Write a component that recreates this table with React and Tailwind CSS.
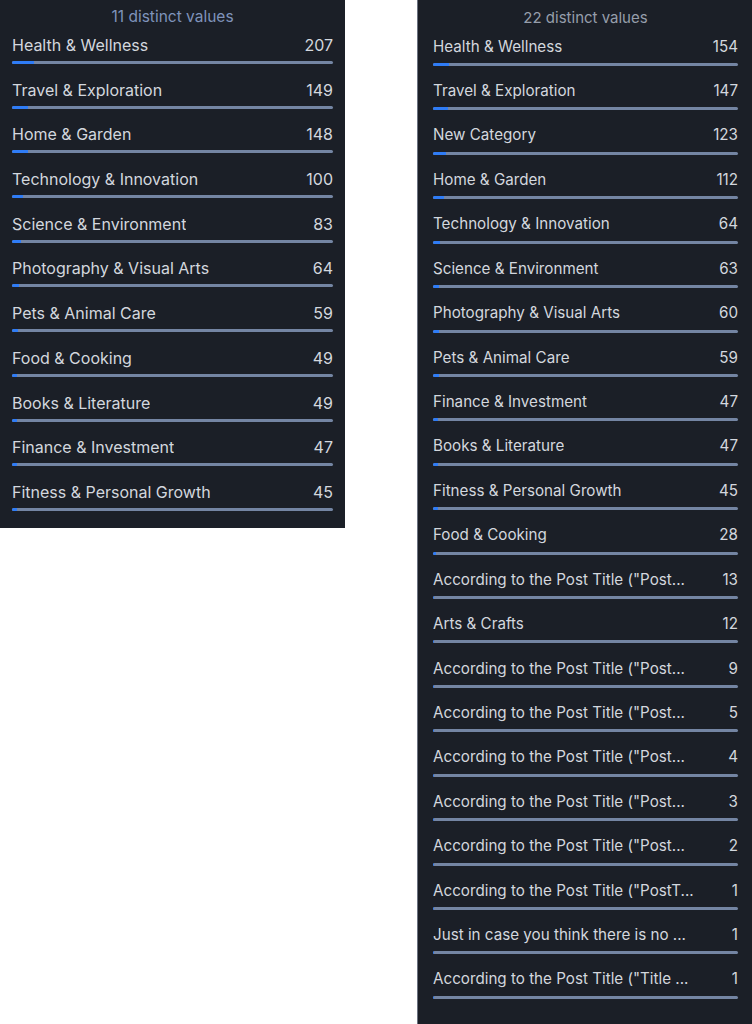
import React from 'react';

const leftRows = [
  ['Health & Wellness', 207],
  ['Travel & Exploration', 149],
  ['Home & Garden', 148],
  ['Technology & Innovation', 100],
  ['Science & Environment', 83],
  ['Photography & Visual Arts', 64],
  ['Pets & Animal Care', 59],
  ['Food & Cooking', 49],
  ['Books & Literature', 49],
  ['Finance & Investment', 47],
  ['Fitness & Personal Growth', 45],
];

const rightRows = [
  ['Health & Wellness', 154],
  ['Travel & Exploration', 147],
  ['New Category', 123],
  ['Home & Garden', 112],
  ['Technology & Innovation', 64],
  ['Science & Environment', 63],
  ['Photography & Visual Arts', 60],
  ['Pets & Animal Care', 59],
  ['Finance & Investment', 47],
  ['Books & Literature', 47],
  ['Fitness & Personal Growth', 45],
  ['Food & Cooking', 28],
  ['According to the Post Title ("Post...', 13],
  ['Arts & Crafts', 12],
  ['According to the Post Title ("Post...', 9],
  ['According to the Post Title ("Post...', 5],
  ['According to the Post Title ("Post...', 4],
  ['According to the Post Title ("Post...', 3],
  ['According to the Post Title ("Post...', 2],
  ['According to the Post Title ("PostT...', 1],
  ['Just in case you think there is no ...', 1],
  ['According to the Post Title ("Title ...', 1],
];

const TOTAL = 3000;

const ValueRow = ({ label, count, big }) => (
  <div className={big ? 'h-[44.7px]' : 'h-[44.43px]'}>
    <div className={`flex justify-between items-center text-[#d3d7de] ${big ? 'h-[22px] text-[16px]' : 'h-[22px] text-[15.2px]'}`}>
      <span className="truncate">{label}</span>
      <span className="ml-4">{count}</span>
    </div>
    <div className="mt-[5px] h-[3px] rounded-full bg-[#7485a3] overflow-hidden">
      <div className="h-full bg-[#2f7cf6]" style={{ width: `${(count / TOTAL) * 100}%` }}></div>
    </div>
  </div>
);

export default function App() {
  return (
    <div className="flex items-start gap-[72px] bg-white min-h-[1024px]" style={{ fontFamily: 'Inter, "Noto Sans", sans-serif' }}>
      {/* Left column summary */}
      <div className="w-[345px] h-[528px] bg-[#1b1f27] px-[12px] pt-[7px]">
        <div className="h-[20px] leading-[20px] mb-[7px] text-center text-[15.5px] text-[#7f93bb]">11 distinct values</div>
        {leftRows.map(([label, count], i) => (
          <ValueRow key={i} label={label} count={count} big />
        ))}
      </div>

      {/* Right column summary */}
      <div className="w-[335px] h-[1024px] bg-[#1b1f27] border-l border-[#6b7280] pl-[15px] pr-[14px] pt-[8px]">
        <div className="h-[20px] leading-[20px] mb-[8px] text-center text-[15px] text-[#969eab]">22 distinct values</div>
        {rightRows.map(([label, count], i) => (
          <ValueRow key={i} label={label} count={count} />
        ))}
      </div>
    </div>
  );
}
